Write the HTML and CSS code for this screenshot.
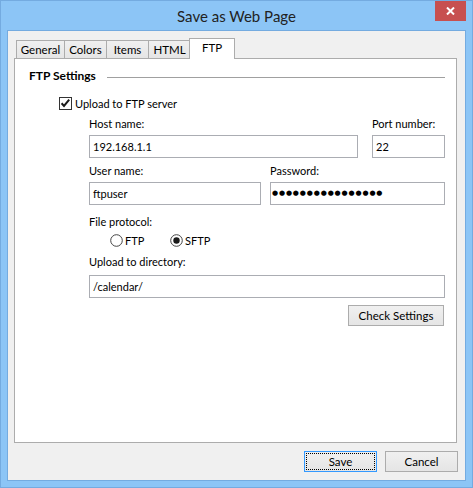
FILE: index.html
```html
<!DOCTYPE html>
<html>
<head>
<meta charset="utf-8">
<title>Save as Web Page</title>
<link rel="stylesheet" href="styles.css">
</head>
<body>
<div class="window">
  <div class="titlebar">
    <span class="title">Save as Web Page</span>
    <div class="close">
      <svg width="9" height="8" viewBox="0 0 9 8"><path d="M1 0.5 L8 7.5 M8 0.5 L1 7.5" stroke="#fff" stroke-width="2" fill="none"/></svg>
    </div>
  </div>
  <div class="client">
    <div class="tabs">
      <div class="tab t-general">General</div>
      <div class="tab t-colors">Colors</div>
      <div class="tab t-items">Items</div>
      <div class="tab t-html">HTML</div>
      <div class="tab active">FTP</div>
    </div>
    <div class="panel">
      <div class="group-head"><span class="group-title">FTP Settings</span><span class="rule"></span></div>
      <div class="check-row">
        <span class="checkbox"><svg width="13" height="13" viewBox="0 0 13 13"><rect x="0.5" y="0.5" width="12" height="12" fill="#fff" stroke="#333"/><path d="M2.6 6.3 L5 8.9 L10.2 2.6" stroke="#1a1a1a" stroke-width="2" fill="none"/></svg></span>
        <span class="check-label">Upload to FTP server</span>
      </div>
      <div class="form">
        <div class="row host-row">
          <div class="col"><div class="label">Host name:</div><div class="field">192.168.1.1</div></div>
          <div class="col"><div class="label">Port number:</div><div class="field">22</div></div>
        </div>
        <div class="row user-row">
          <div class="col"><div class="label">User name:</div><div class="field">ftpuser</div></div>
          <div class="col"><div class="label">Password:</div><div class="field password">&#9679;&#9679;&#9679;&#9679;&#9679;&#9679;&#9679;&#9679;&#9679;&#9679;&#9679;&#9679;&#9679;&#9679;&#9679;&#9679;</div></div>
        </div>
        <div class="label proto-label">File protocol:</div>
        <div class="radio-row">
          <span class="radio-item r-ftp"><svg width="13" height="13" viewBox="0 0 13 13"><circle cx="6.5" cy="6.5" r="5.8" fill="#fff" stroke="#444"/></svg><span>FTP</span></span>
          <span class="radio-item"><svg width="13" height="13" viewBox="0 0 13 13"><circle cx="6.5" cy="6.5" r="5.8" fill="#fff" stroke="#444"/><circle cx="6.5" cy="6.5" r="3.2" fill="#1a1a1a"/></svg><span>SFTP</span></span>
        </div>
        <div class="label dir-label">Upload to directory:</div>
        <div class="field dir-field">/calendar/</div>
        <div class="check-btn-row"><div class="button check-btn">Check Settings</div></div>
      </div>
    </div>
    <div class="buttons">
      <div class="button default">Save</div>
      <div class="button">Cancel</div>
    </div>
  </div>
</div>
</body>
</html>
```

FILE: styles.css
```css
html, body {
  margin: 0;
  padding: 0;
  background: #fff;
}
body {
  width: 473px;
  height: 488px;
  font-family: Lato, "Open Sans", sans-serif;
  font-size: 11px;
  color: #000;
}
.window {
  position: relative;
  box-sizing: border-box;
  width: 473px;
  height: 488px;
  background: #8cc5f6;
  border: 1px solid #74abe0;
  padding: 0 6px 6px 6px;
  display: flex;
  flex-direction: column;
}
.titlebar {
  height: 29px;
  display: flex;
  align-items: center;
  justify-content: center;
}
.title {
  font-size: 15px;
  color: #222;
  margin-top: 1px;
}
.close {
  position: absolute;
  top: 0;
  right: 6px;
  width: 31px;
  height: 20px;
  background: #c75050;
  display: flex;
  align-items: center;
  justify-content: center;
}
.client {
  flex: 1;
  background: #f0f0f0;
  border: 1px solid #74abe0;
  display: flex;
  flex-direction: column;
}
.tabs {
  height: 27px;
  box-sizing: border-box;
  padding: 7px 0 0 8px;
  display: flex;
  align-items: flex-end;
}
.tab {
  box-sizing: border-box;
  height: 18px;
  border: 1px solid #acacac;
  border-bottom: none;
  background: linear-gradient(#f0f0f0, #e5e5e5);
  text-align: center;
  line-height: 17px;
  margin-left: -1px;
  font-size: 11.5px;
}
.t-general { width: 49px; margin-left: 0; }
.t-colors { width: 43px; }
.t-items { width: 43px; }
.t-html { width: 43px; }
.tab.active {
  position: relative;
  z-index: 2;
  width: 46px;
  height: 21px;
  margin-left: -2px;
  margin-bottom: -1px;
  background: #fff;
  line-height: 18px;
}
.panel {
  box-sizing: border-box;
  width: 443px;
  height: 385px;
  margin-left: 6px;
  background: #fff;
  border: 1px solid #acacac;
}
.group-head {
  display: flex;
  align-items: center;
  height: 16px;
  margin: 9px 11px 0 14px;
}
.group-title {
  font-weight: bold;
  font-size: 12px;
  line-height: 16px;
}
.rule {
  flex: 1;
  height: 1px;
  background: #a0a0a0;
  margin-left: 11px;
  margin-top: 2px;
}
.check-row {
  display: flex;
  align-items: center;
  height: 15px;
  margin: 12px 0 0 44px;
}
.checkbox {
  display: flex;
  width: 13px;
  height: 13px;
  margin-right: 3px;
}
.check-label {
  line-height: 15px;
}
.form {
  padding: 0 11px 0 74px;
}
.label {
  height: 15px;
  line-height: 15px;
  margin-bottom: 4px;
}
.row {
  display: grid;
  margin-top: 5px;
}
.host-row {
  grid-template-columns: 1fr 73px;
  column-gap: 14px;
}
.user-row {
  grid-template-columns: 172px 1fr;
  column-gap: 9px;
}
.field {
  box-sizing: border-box;
  height: 23px;
  border: 1px solid #abadb3;
  background: #fff;
  padding-left: 3px;
  line-height: 21px;
  white-space: nowrap;
  overflow: hidden;
}
.field.password {
  font-family: "DejaVu Sans", sans-serif;
  font-size: 7px;
  letter-spacing: 0.85px;
  padding-left: 1px;
}
.proto-label {
  margin-top: 9px;
  margin-bottom: 4px;
}
.radio-row {
  display: flex;
  align-items: center;
  height: 15px;
  padding-left: 21px;
}
.radio-item {
  display: flex;
  align-items: center;
  line-height: 15px;
}
.radio-item svg {
  margin-right: 2px;
}
.r-ftp {
  width: 60px;
}
.dir-label {
  margin-top: 6px;
  margin-bottom: 6px;
}
.check-btn-row {
  display: flex;
  justify-content: flex-end;
  margin-top: 7px;
  padding-right: 1px;
}
.button {
  position: relative;
  box-sizing: border-box;
  width: 73px;
  height: 21px;
  border: 1px solid #acacac;
  background: linear-gradient(#f0f0f0, #e5e5e5);
  text-align: center;
  line-height: 19px;
  font-size: 11.5px;
}
.check-btn {
  width: 96px;
}
.buttons {
  display: flex;
  justify-content: flex-end;
  gap: 8px;
  margin: 8px 7px 0 0;
}
.button.default {
  border-color: #3399ff;
}
.button.default::after {
  content: "";
  position: absolute;
  top: 1px;
  left: 1px;
  right: 1px;
  bottom: 1px;
  border: 1px dotted #000;
}
```
